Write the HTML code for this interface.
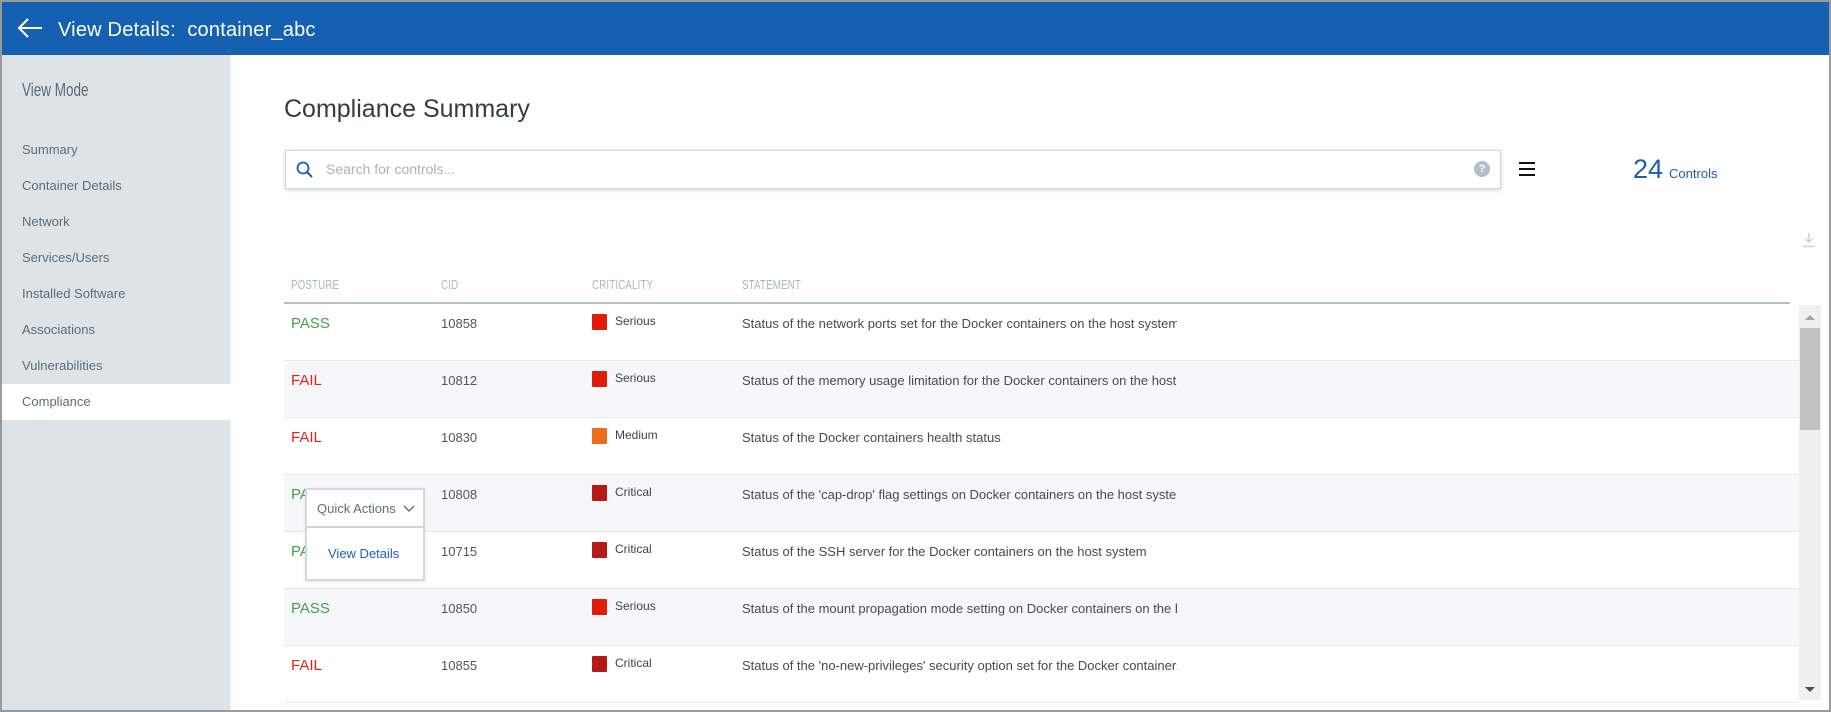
<!DOCTYPE html>
<html><head><meta charset="utf-8"><style>
*{box-sizing:border-box;margin:0;padding:0}
body{width:1831px;height:712px;overflow:hidden;background:#fff;font-family:"Liberation Sans",sans-serif;position:relative}
.frame{position:absolute;left:0;top:0;width:1831px;height:712px;border:2px solid #9a9a9a;border-left-width:2px}
.hdr{position:absolute;left:2px;top:2px;width:1827px;height:53px;background:#1560b0;color:#fff}
.hdr .t{position:absolute;left:56px;top:17px;font-size:20px;letter-spacing:0.2px}
.side{position:absolute;left:2px;top:55px;width:228px;height:655px;background:#dde3e7;box-shadow:1px 0 2px rgba(0,0,0,.08)}
.vm{position:absolute;left:20px;top:25px;font-size:18px;color:#5b6a76;transform:scaleX(.75);transform-origin:left;font-family:"Liberation Sans Narrow","Liberation Sans",sans-serif}
.si{position:absolute;left:20px;font-size:13px;color:#5d6d7a}
.sel{position:absolute;left:2px;top:384px;width:282px;height:36px;background:#fff}
.title{position:absolute;left:284px;top:95px;font-size:25px;color:#333c44}
.search{position:absolute;left:285px;top:150px;width:1216px;height:39px;border:1px solid #cfd8de;box-shadow:0 1px 4px rgba(0,0,0,.18);background:#fff}
.search .ph{position:absolute;left:40px;top:10px;font-size:14px;color:#a7b3bc}
.help{position:absolute;right:10px;top:10px;width:16px;height:16px;border-radius:50%;background:#b3bec6;color:#fff;font-size:11px;font-weight:bold;text-align:center;line-height:16px}
.ham{position:absolute;left:1519px;top:162px;width:16px;height:14px;border-top:2px solid #111;border-bottom:2px solid #111}
.ham:after{content:"";position:absolute;left:0;top:4px;width:16px;height:2px;background:#111}
.cnt{position:absolute;left:1633px;top:154px;color:#1a5fb4}
.cnt b{font-weight:normal;font-size:27px}
.cnt span{font-size:13px;margin-left:6px}
.th{position:absolute;top:277px;font-size:13px;color:#a9b7c1;transform:scaleX(.75);transform-origin:left;letter-spacing:.2px}
.hline{position:absolute;left:284px;top:302px;width:1506px;height:2px;background:#b3c0c8}
.row{position:absolute;left:284px;width:1515px;height:57px;border-bottom:1px solid #e6eaed}
.row.alt{background:#f6f7f9}
.row div{position:absolute;top:11px;white-space:nowrap}
.p{left:7px;font-size:15px}
.pass{color:#43a047}.fail{color:#e3231b}
.cid{left:157px;font-size:13px;color:#555;top:12px!important}
.sq{left:308px;top:10px!important;width:15px;height:16px;border-radius:1px}
.cl{left:331px;font-size:12px;color:#444;top:10px!important}
.st{left:458px;font-size:13px;color:#4a4a4a;width:435px;overflow:hidden;top:12px!important}
.sb{position:absolute;left:1799px;top:305px;width:22px;height:395px;background:#f0f0f0}
.thumb{position:absolute;left:1px;top:23px;width:20px;height:102px;background:#c1c1c1}
.qa{position:absolute;left:305px;top:488px;width:120px;height:93px;background:#fff;border:2px solid #d3dadf;box-shadow:0 1px 3px rgba(0,0,0,.1)}
.qa .h{position:absolute;left:0;top:0;width:116px;height:38px;border-bottom:2px solid #cdd5db;font-size:13px;color:#5f6f7b;padding:11px 0 0 10px}
.qa .v{position:absolute;left:21px;top:56px;font-size:13px;color:#1a63b8}
</style></head><body>
<div class="hdr">
<svg style="position:absolute;left:14px;top:14px" width="28" height="24" viewBox="0 0 28 24"><path d="M26 12H3M12 3L3 12l9 9" stroke="#fff" stroke-width="2" fill="none"/></svg>
<div class="t">View Details:&nbsp; container_abc</div>
</div>
<div class="side">
<div class="vm">View Mode</div>
<div class="si" style="top:87px">Summary</div>
<div class="si" style="top:123px">Container Details</div>
<div class="si" style="top:159px">Network</div>
<div class="si" style="top:195px">Services/Users</div>
<div class="si" style="top:231px">Installed Software</div>
<div class="si" style="top:267px">Associations</div>
<div class="si" style="top:303px">Vulnerabilities</div>
</div>
<div class="sel"><div class="si" style="top:10px;left:20px">Compliance</div></div>
<div class="title">Compliance Summary</div>
<div class="search">
<svg style="position:absolute;left:10px;top:10px" width="18" height="18" viewBox="0 0 18 18"><circle cx="7" cy="7" r="5.5" stroke="#1a5fb4" stroke-width="1.8" fill="none"/><path d="M11 11l5 5" stroke="#1a5fb4" stroke-width="2"/></svg>
<div class="ph">Search for controls...</div>
<div class="help">?</div>
</div>
<div class="ham"></div>
<div class="cnt"><b>24</b><span>Controls</span></div>
<svg style="position:absolute;left:1801px;top:232px" width="16" height="16" viewBox="0 0 16 16"><path d="M8 1v9M4.5 6.5L8 10l3.5-3.5M2 14.5h12" stroke="#c9d3da" stroke-width="1.5" fill="none"/></svg>
<div class="th" style="left:291px">POSTURE</div>
<div class="th" style="left:441px">CID</div>
<div class="th" style="left:592px">CRITICALITY</div>
<div class="th" style="left:742px">STATEMENT</div>
<div class="hline"></div>

<div class="row" style="top:304px"><div class="p pass">PASS</div><div class="cid">10858</div><div class="sq" style="background:#e01b0a"></div><div class="cl">Serious</div><div class="st">Status of the network ports set for the Docker containers on the host system</div></div>
<div class="row alt" style="top:361px"><div class="p fail">FAIL</div><div class="cid">10812</div><div class="sq" style="background:#e01b0a"></div><div class="cl">Serious</div><div class="st">Status of the memory usage limitation for the Docker containers on the host system</div></div>
<div class="row" style="top:418px"><div class="p fail">FAIL</div><div class="cid">10830</div><div class="sq" style="background:#e86e1c"></div><div class="cl">Medium</div><div class="st">Status of the Docker containers health status</div></div>
<div class="row alt" style="top:475px"><div class="p pass">PASS</div><div class="cid">10808</div><div class="sq" style="background:#b71916"></div><div class="cl">Critical</div><div class="st">Status of the 'cap-drop' flag settings on Docker containers on the host system</div></div>
<div class="row" style="top:532px"><div class="p pass">PASS</div><div class="cid">10715</div><div class="sq" style="background:#b71916"></div><div class="cl">Critical</div><div class="st">Status of the SSH server for the Docker containers on the host system</div></div>
<div class="row alt" style="top:589px"><div class="p pass">PASS</div><div class="cid">10850</div><div class="sq" style="background:#e01b0a"></div><div class="cl">Serious</div><div class="st">Status of the mount propagation mode setting on Docker containers on the host</div></div>
<div class="row" style="top:646px"><div class="p fail">FAIL</div><div class="cid">10855</div><div class="sq" style="background:#b71916"></div><div class="cl">Critical</div><div class="st">Status of the 'no-new-privileges' security option set for the Docker containers</div></div>

<div class="sb"><div class="thumb"></div>
<svg style="position:absolute;left:5px;top:8px" width="12" height="8"><path d="M1 7L6 2l5 5z" fill="#a3a3a3"/></svg>
<svg style="position:absolute;left:5px;top:381px" width="12" height="8"><path d="M1 1l5 5 5-5z" fill="#505050"/></svg>
</div>

<div class="qa"><div class="h">Quick Actions
<svg style="position:absolute;left:96px;top:15px" width="12" height="8"><path d="M1 1l5 5 5-5" stroke="#5f6f7b" stroke-width="1.4" fill="none"/></svg></div>
<div class="v">View Details</div></div>
<div class="frame"></div>
</body></html>
